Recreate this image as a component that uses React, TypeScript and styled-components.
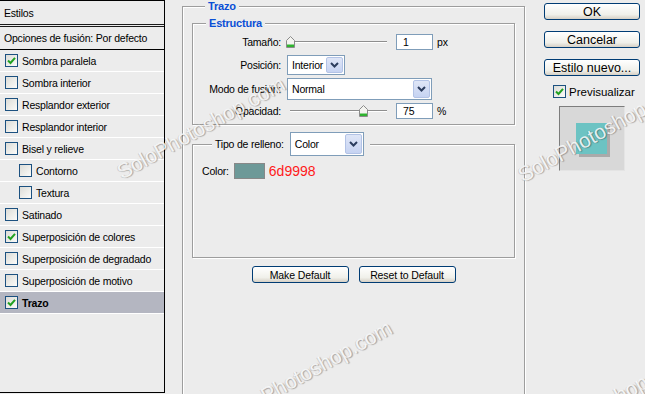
import styled, { createGlobalStyle } from 'styled-components'

const GlobalStyle = createGlobalStyle`
  html, body {
    margin: 0;
    padding: 0;
    background: #ececec;
  }
  body {
    font-family: 'Liberation Sans', Arial, sans-serif;
    font-size: 10.5px;
    letter-spacing: -0.2px;
    color: #000;
  }
`

const styleRows = [
  { label: 'Sombra paralela', checked: true },
  { label: 'Sombra interior' },
  { label: 'Resplandor exterior' },
  { label: 'Resplandor interior' },
  { label: 'Bisel y relieve' },
  { label: 'Contorno', indent: true },
  { label: 'Textura', indent: true },
  { label: 'Satinado' },
  { label: 'Superposición de colores', checked: true },
  { label: 'Superposición de degradado' },
  { label: 'Superposición de motivo' },
  { label: 'Trazo', checked: true, active: true },
]

// watermark centres
const marks = [
  { x: 201, y: 128 },
  { x: 308, y: 372 },
  { x: 602, y: 131 },
  { x: 604, y: 404 },
]

const Check = ({ checked }: { checked?: boolean }) => (
  <CheckBox>
    {checked && (
      <svg width="9" height="9" viewBox="0 0 9 9">
        <path d="M1 4.5 L3.5 7 L8 1.8" fill="none" stroke="#21a121" strokeWidth="2" />
      </svg>
    )}
  </CheckBox>
)

const Slider = ({ value, inset }: { value: number; inset: number }) => (
  <Track $inset={inset}>
    <Thumb style={{ left: `${value}%` }}>
      <svg width="9" height="12" viewBox="0 0 9 12">
        <path d="M0.5 11.5 V4.5 L4.5 0.5 L8.5 4.5 V11.5 Z" fill="#f4f4f0" stroke="#8b8b8b" />
        <rect x="1" y="8.5" width="7" height="2.5" fill="#2fb32f" />
      </svg>
    </Thumb>
  </Track>
)

const Combo = ({ value, width, height }: { value: string; width: number; height: number }) => (
  <Select $w={width} $h={height}>
    <span>{value}</span>
    <Arrow>
      <svg width="9" height="6" viewBox="0 0 9 6">
        <path d="M1 1 L4.5 4.5 L8 1" fill="none" stroke="#2c3d5e" strokeWidth="2" />
      </svg>
    </Arrow>
  </Select>
)

export default function App() {
  return (
    <>
      <GlobalStyle />
      <Screen>
        <LeftPanel>
          <PanelHead>Estilos</PanelHead>
          <BlendRow>Opciones de fusión: Por defecto</BlendRow>
          {styleRows.map((r) => (
            <StyleRow key={r.label} $indent={r.indent} $active={r.active}>
              <Check checked={r.checked} />
              {r.label}
            </StyleRow>
          ))}
        </LeftPanel>

        <Main>
          <OuterGroup>
            <Legend>Trazo</Legend>
            <InnerGroup>
              <Legend>Estructura</Legend>
              <FormRow $top={4}>
                <Label>Tamaño:</Label>
                <Slider value={0} inset={0} />
                <NumInput>1</NumInput>
                <Unit>px</Unit>
              </FormRow>
              <FormRow $top={5}>
                <Label>Posición:</Label>
                <Combo value="Interior" width={58} height={20} />
              </FormRow>
              <FormRow $top={3}>
                <Label>Modo de fusión:</Label>
                <Combo value="Normal" width={145} height={22} />
              </FormRow>
              <FormRow $top={3}>
                <Label>Opacidad:</Label>
                <Slider value={72} inset={3} />
                <NumInput>75</NumInput>
                <Unit>%</Unit>
              </FormRow>
            </InnerGroup>

            <FillGroup>
              <FillLegend>
                Tipo de relleno:
                <Combo value="Color" width={74} height={24} />
              </FillLegend>
              <ColorRow>
                Color:
                <Swatch $color="#6d9998" />
                <Hex>6d9998</Hex>
              </ColorRow>
            </FillGroup>

            <ButtonRow>
              <XpButton>Make Default</XpButton>
              <XpButton>Reset to Default</XpButton>
            </ButtonRow>
          </OuterGroup>
        </Main>

        <Side>
          <SideButton>OK</SideButton>
          <SideButton>Cancelar</SideButton>
          <SideButton>Estilo nuevo...</SideButton>
          <PreviewToggle>
            <Check checked />
            Previsualizar
          </PreviewToggle>
          <Preview>
            <PreviewSquare />
          </Preview>
        </Side>

        {marks.map((m, i) => (
          <Watermark key={i} style={{ left: m.x, top: m.y }}>
            SoloPhotoshop.com
          </Watermark>
        ))}
      </Screen>
    </>
  )
}

const Screen = styled.div`
  position: relative;
  display: flex;
  width: 645px;
  height: 394px;
  overflow: hidden;
  background: #ececec;
`

const LeftPanel = styled.div`
  box-sizing: border-box;
  width: 165px;
  height: 393px;
  flex-shrink: 0;
  border: 1px solid #000;
  border-left: none;
  display: flex;
  flex-direction: column;
`

const PanelHead = styled.div`
  height: 23px;
  padding-left: 4px;
  display: flex;
  align-items: center;
  border-bottom: 3px double #1a1a1a;
`

const BlendRow = styled.div`
  height: 22px;
  padding-left: 4px;
  display: flex;
  align-items: center;
  white-space: nowrap;
  border-bottom: 1px solid #000;
`

const StyleRow = styled.div<{ $indent?: boolean; $active?: boolean }>`
  height: 21px;
  display: flex;
  align-items: center;
  gap: 4px;
  padding-left: ${(p) => (p.$indent ? 19 : 5)}px;
  border-bottom: 1px solid #fff;
  white-space: nowrap;
  background: ${(p) => (p.$active ? '#b4b6c1' : 'transparent')};
  font-weight: ${(p) => (p.$active ? 'bold' : 'normal')};
`

const CheckBox = styled.span`
  box-sizing: border-box;
  width: 13px;
  height: 13px;
  flex-shrink: 0;
  border: 1px solid #1c5180;
  background: linear-gradient(135deg, #dcdcd7, #fbfbf9);
  display: flex;
  align-items: center;
  justify-content: center;
`

const Main = styled.div`
  width: 360px;
  flex-shrink: 0;
  padding-left: 17px;
  box-sizing: border-box;
`

const Group = styled.fieldset`
  margin: 0;
  padding: 0;
  min-width: 0;
  border: 1px solid #9d9d9d;
  box-shadow: inset 1px 1px 0 #fff, 1px 1px 0 #fff;
`

const OuterGroup = styled(Group)`
  width: 343px;
  box-sizing: border-box;
  height: 420px;
  padding: 0 9px 0 9px;
`

const Legend = styled.legend`
  margin-left: 13px;
  padding: 0 3px;
  background: #ececec;
  color: #0a4fd6;
  font-weight: bold;
  font-size: 11px;
  line-height: 13px;
`

const InnerGroup = styled(Group)`
  margin-top: 4px;
  padding-bottom: 5px;
`

const FormRow = styled.div<{ $top: number }>`
  display: flex;
  align-items: center;
  margin-top: ${(p) => p.$top}px;
`

const Label = styled.span`
  width: 88px;
  padding-right: 6px;
  text-align: right;
  white-space: nowrap;
  flex-shrink: 0;
`

const Track = styled.div<{ $inset: number }>`
  position: relative;
  width: ${(p) => 100 - p.$inset}px;
  margin-left: ${(p) => p.$inset}px;
  height: 2px;
  margin-right: 9px;
  border-top: 1px solid #8e8e8e;
  border-bottom: 1px solid #fff;
  box-sizing: border-box;
`

const Thumb = styled.span`
  position: absolute;
  top: -6px;
  margin-left: -1px;
  line-height: 0;
`

const NumInput = styled.div`
  box-sizing: border-box;
  width: 37px;
  height: 16px;
  padding-left: 6px;
  background: #fff;
  border: 1px solid #7f9db9;
  display: flex;
  align-items: center;
`

const Unit = styled.span`
  margin-left: 4px;
`

const Select = styled.div<{ $w: number; $h: number }>`
  box-sizing: border-box;
  width: ${(p) => p.$w}px;
  height: ${(p) => p.$h}px;
  background: #fff;
  border: 1px solid #7f9db9;
  display: flex;
  align-items: center;
  justify-content: space-between;
  padding: 1px;
  font-weight: normal;
  color: #000;
  span:first-child {
    padding-left: 3px;
  }
`

const Arrow = styled.span`
  box-sizing: border-box;
  width: 17px;
  height: 100%;
  border: 1px solid #b3c3e6;
  border-radius: 2px;
  background: linear-gradient(#dfe6f7, #c6d3f2);
  display: flex;
  align-items: center;
  justify-content: center;
`

const FillGroup = styled(Group)`
  margin-top: 7px;
  height: 126px;
  box-sizing: border-box;
`

const FillLegend = styled.legend`
  margin-left: 19px;
  padding: 0 6px 0 3px;
  background: #ececec;
  display: flex;
  align-items: center;
  gap: 6px;
`

const ColorRow = styled.div`
  display: flex;
  align-items: center;
  margin-top: 7px;
  padding-left: 9px;
`

const Swatch = styled.span<{ $color: string }>`
  width: 31px;
  height: 16px;
  box-sizing: border-box;
  margin-left: 5px;
  background: ${(p) => p.$color};
  border: 1px solid #888;
`

const Hex = styled.span`
  margin-left: 4px;
  color: #ff1a1a;
  font-size: 14px;
  letter-spacing: 0;
`

const ButtonRow = styled.div`
  display: flex;
  justify-content: center;
  gap: 10px;
  margin-top: 8px;
`

const XpButton = styled.button`
  box-sizing: border-box;
  width: 97px;
  height: 17px;
  padding: 0;
  border: 1px solid #003c74;
  border-radius: 3px;
  background: linear-gradient(#ffffff, #f0f0ea 70%, #d6d0c5);
  font-family: 'Liberation Sans', Arial, sans-serif;
  font-size: 10.5px;
  letter-spacing: -0.1px;
  color: #000;
`

const Side = styled.div`
  flex: 1;
  display: flex;
  flex-direction: column;
  padding: 3px 0 0 19px;
`

const SideButton = styled(XpButton)`
  width: 96px;
  margin-bottom: 11px;
  font-size: 12.5px;
  letter-spacing: 0;
`

const PreviewToggle = styled.label`
  display: flex;
  align-items: center;
  gap: 3px;
  margin: -2px 0 0 9px;
  font-size: 11.5px;
  letter-spacing: 0;
`

const Preview = styled.div`
  box-sizing: border-box;
  width: 66px;
  height: 65px;
  margin: 8px 0 0 15px;
  padding: 16px 0 0 16px;
  background: #d8d8d8;
  border-left: 1px solid #7d7d7d;
  border-top: 1px solid #7d7d7d;
  border-right: 1px solid #e4e4e4;
  border-bottom: 1px solid #e4e4e4;
`

const PreviewSquare = styled.div`
  width: 31px;
  height: 31px;
  background: #6cc3c3;
  box-shadow: 3px 3px 0 #aaaaaa;
`

const Watermark = styled.div`
  position: absolute;
  transform: translate(-50%, -50%) rotate(-29deg);
  font-family: 'Liberation Sans', Arial, sans-serif;
  font-size: 21px;
  letter-spacing: 0;
  white-space: nowrap;
  color: rgba(255, 255, 255, 0.85);
  text-shadow: 1px 1px 1px rgba(0, 0, 0, 0.3), -1px 0 0 rgba(0, 0, 0, 0.12);
  pointer-events: none;
`
